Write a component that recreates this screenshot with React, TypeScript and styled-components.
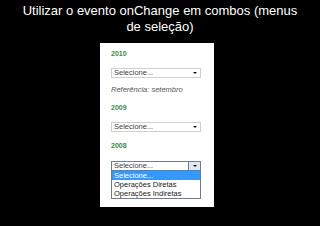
import React from "react";
import styled, { createGlobalStyle } from "styled-components";

const Global = createGlobalStyle`
  html, body { margin: 0; padding: 0; background: #000; }
  body { width: 320px; height: 226px; overflow: hidden; font-family: "Liberation Sans", Arial, sans-serif; }
`;

const Page = styled.div`
  width: 320px;
  height: 226px;
  background: #000;
  display: flex;
  flex-direction: column;
  align-items: center;
`;

const Title = styled.h1`
  margin: 3px 0 0;
  width: 282px;
  color: #fff;
  font-family: "Liberation Sans", Arial, sans-serif;
  font-weight: normal;
  font-size: 13px;
  line-height: 16px;
  text-align: center;
`;

const Panel = styled.div`
  margin-top: 8px;
  align-self: flex-start;
  margin-left: 100px;
  width: 114px;
  height: 164px;
  background: #fff;
  box-sizing: border-box;
  padding: 6px 0 0 11px;
  display: flex;
  flex-direction: column;
  font-family: "Liberation Sans", Arial, sans-serif;
`;

const Year = styled.div<{ $gap: number }>`
  color: #3b8a4c;
  font-weight: bold;
  font-size: 7px;
  line-height: 10px;
  margin-bottom: ${(p) => p.$gap}px;
`;

const Select = styled.div<{ $open?: boolean; $gap?: number }>`
  width: 90px;
  height: 10px;
  box-sizing: border-box;
  border: 1px solid ${(p) => (p.$open ? "#6f7c8c" : "#cfcfcf")};
  background: #fff;
  display: flex;
  align-items: center;
  font-size: 7.5px;
  color: #444;
  padding-left: 2px;
  margin-bottom: ${(p) => p.$gap ?? 0}px;
`;

const SelText = styled.span`
  flex: 1;
  line-height: 8px;
`;

const Arrow = styled.span<{ $open?: boolean }>`
  width: ${(p) => (p.$open ? 12 : 10)}px;
  height: 100%;
  display: flex;
  align-items: center;
  justify-content: center;
  box-sizing: border-box;
  ${(p) => (p.$open ? "border-left: 1px solid #6f7c8c; background: #dfe8f3;" : "")}
  &::after {
    content: "";
    border-left: 2px solid transparent;
    border-right: 2px solid transparent;
    border-top: 2.5px solid #111;
  }
`;

const Note = styled.div`
  font-style: italic;
  font-size: 7.5px;
  color: #555;
  line-height: 9px;
  margin-bottom: 9px;
`;

const List = styled.div`
  width: 90px;
  box-sizing: border-box;
  border: 1px solid #6f7c8c;
  border-top: none;
  background: #fff;
  display: flex;
  flex-direction: column;
`;

const Option = styled.div<{ $active?: boolean }>`
  font-size: 7.5px;
  line-height: 9px;
  height: 9px;
  padding-left: 2px;
  color: ${(p) => (p.$active ? "#fff" : "#222")};
  background: ${(p) => (p.$active ? "#3399ff" : "#fff")};
`;

export default function App() {
  return (
    <>
      <Global />
      <Page>
        <Title>Utilizar o evento onChange em combos (menus de seleção)</Title>
        <Panel>
          <Year $gap={9}>2010</Year>
          <Select $gap={7}>
            <SelText>Selecione...</SelText>
            <Arrow />
          </Select>
          <Note>Referência: setembro</Note>
          <Year $gap={9}>2009</Year>
          <Select $gap={9}>
            <SelText>Selecione...</SelText>
            <Arrow />
          </Select>
          <Year $gap={10}>2008</Year>
          <Select $open>
            <SelText>Selecione...</SelText>
            <Arrow $open />
          </Select>
          <List>
            <Option $active>Selecione...</Option>
            <Option>Operações Diretas</Option>
            <Option>Operações Indiretas</Option>
          </List>
        </Panel>
      </Page>
    </>
  );
}
